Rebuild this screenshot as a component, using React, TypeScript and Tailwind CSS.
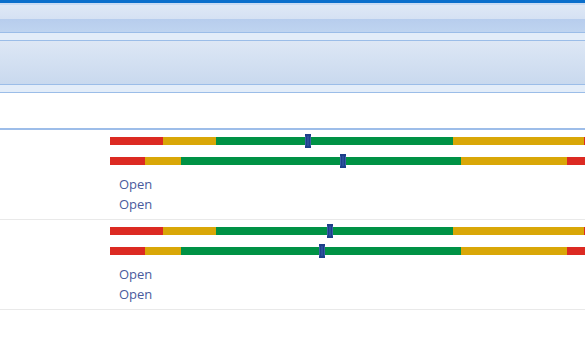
import React from "react";

type Seg = { w: number; c: string };
const RED = "#dc2a22";
const YEL = "#d9a707";
const GRN = "#009245";

function Marker({ left }: { left: number }) {
  return (
    <svg
      className="absolute top-[-3px]"
      style={{ left }}
      width="6"
      height="14"
      viewBox="0 0 6 14"
    >
      <rect x="0" y="0" width="6" height="14" fill="#1d3f8a" />
      <rect x="2" y="2" width="2" height="10" fill="#2a4f9a" />
      <rect x="0" y="2" width="1" height="10" fill="#3a5fa6" />
      <rect x="5" y="2" width="1" height="10" fill="#3a5fa6" />
    </svg>
  );
}

function Bar({ segs, marker }: { segs: Seg[]; marker: number }) {
  return (
    <div className="relative h-[8px] w-[475px]">
      <div className="flex h-[8px] w-[475px] overflow-hidden">
        {segs.map((s, i) => (
          <div key={i} className="h-full shrink-0" style={{ width: s.w, background: s.c }} />
        ))}
      </div>
      <Marker left={marker} />
    </div>
  );
}

const bar1: Seg[] = [
  { w: 53, c: RED },
  { w: 53, c: YEL },
  { w: 237, c: GRN },
  { w: 131, c: YEL },
  { w: 20, c: RED },
];
const bar2: Seg[] = [
  { w: 35, c: RED },
  { w: 36, c: YEL },
  { w: 280, c: GRN },
  { w: 106, c: YEL },
  { w: 30, c: RED },
];

function Row({ m1, m2 }: { m1: number; m2: number }) {
  return (
    <div className="h-[90px] border-b border-[#e9e9e9] pl-[110px] pt-[7px]">
      <div className="flex flex-col gap-[12px]">
        <Bar segs={bar1} marker={m1} />
        <Bar segs={bar2} marker={m2} />
      </div>
      <div
        className="mt-[9px] ml-[9px] flex flex-col text-[13px] leading-[20px] text-[#4a5b9d]"
        style={{ fontFamily: '"Open Sans", sans-serif' }}
      >
        <span>Open</span>
        <span>Open</span>
      </div>
    </div>
  );
}

export default function App() {
  return (
    <div className="w-[585px] h-[360px] bg-white overflow-hidden">
      <div className="h-[3px] bg-[#0b6fcc]" />
      <div className="h-[2px] bg-[#c9dbf3]" />
      <div className="h-[14px] bg-gradient-to-b from-[#dfe8f6] to-[#d5e1f3]" />
      <div className="h-[13px] bg-gradient-to-b from-[#b7cded] to-[#bfd4f0]" />
      <div className="h-px bg-[#9bbde8]" />
      <div className="h-[7px] bg-[#e3edf9]" />
      <div className="h-px bg-[#9bbde8]" />
      <div className="h-[43px] bg-gradient-to-b from-[#dde7f5] to-[#c9d9ee]" />
      <div className="h-px bg-[#9bbde8]" />
      <div className="h-[7px] bg-[#e3edf9]" />
      <div className="h-px bg-[#9bbde8]" />
      <div className="h-[35px] bg-white" />
      <div className="h-[2px] bg-[#9dbde9]" />
      <Row m1={195} m2={230} />
      <Row m1={217} m2={209} />
    </div>
  );
}
